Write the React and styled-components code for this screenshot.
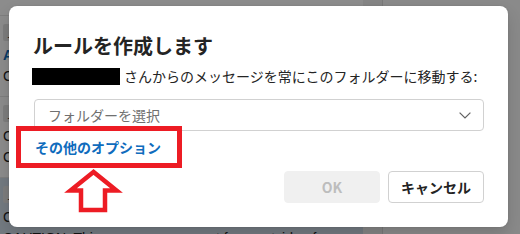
import React from "react";
import styled, { createGlobalStyle } from "styled-components";

const Global = createGlobalStyle`
  html, body { margin: 0; padding: 0; background: #fff; }
  body { font-family: "Noto Sans CJK JP", "Noto Sans", sans-serif; }
  * { box-sizing: border-box; }
`;

const Page = styled.div`
  position: relative;
  width: 520px;
  height: 234px;
  overflow: hidden;
  display: flex;
  background: #fafafa;
`;

const MailList = styled.div`
  width: 363px;
  flex: none;
  display: flex;
  flex-direction: column;
  background: #ffffff;
`;

const MailRow = styled.div`
  height: ${(p) => p.$h || 81}px;
  flex: none;
  display: flex;
  flex-direction: column;
  padding: 8px 0 0 3px;
  border-bottom: 1px solid #e6e6e6;
  background: ${(p) => (p.$selected ? "#d1deec" : "#ffffff")};
  overflow: hidden;
`;

const Chip = styled.div`
  align-self: flex-start;
  height: 17px;
  padding: 0 4px;
  margin-bottom: 4px;
  background: #e3e3e3;
  color: #424242;
  font-size: 12px;
  line-height: 17px;
  border-radius: 2px;
`;

const MailLine = styled.div`
  font-family: "Liberation Sans", "Noto Sans", sans-serif;
  font-size: 14px;
  line-height: 21px;
  white-space: nowrap;
  color: ${(p) => (p.$accent ? "#0f6cbd" : "#242424")};
  font-weight: ${(p) => (p.$accent ? 700 : 400)};
`;

const Gutter = styled.div`
  width: 20px;
  flex: none;
  background: #f2f2f2;
  border-right: 1px solid #dcdcdc;
`;

const ReadingPane = styled.div`
  flex: 1;
  background: #fbfbfb;
`;

const Overlay = styled.div`
  position: absolute;
  inset: 0;
  background: rgba(0, 0, 0, 0.45);
  display: flex;
  align-items: flex-start;
  padding: 6px 12px 0 9px;
`;

const Dialog = styled.div`
  width: 499px;
  background: #ffffff;
  border-radius: 8px;
  box-shadow: 0 0 2px rgba(0, 0, 0, 0.12), 0 8px 16px rgba(0, 0, 0, 0.14);
  padding: 26px 24px 24px 24px;
  display: flex;
  flex-direction: column;
  color: #242424;
`;

const Title = styled.h2`
  margin: 0;
  font-size: 20px;
  line-height: 28px;
  font-weight: 700;
  color: #242424;
`;

const Body = styled.div`
  margin-top: 6px;
  display: flex;
  align-items: center;
  gap: 4px;
  font-size: 14px;
  line-height: 20px;
  height: 20px;
  white-space: nowrap;
`;

const Redacted = styled.span`
  display: inline-block;
  width: 88px;
  height: 17px;
  margin-left: -1px;
  background: #000;
`;

const Select = styled.div`
  margin-top: 13px;
  height: 32px;
  border: 1px solid #d1d1d1;
  border-radius: 4px;
  display: flex;
  align-items: center;
  justify-content: space-between;
  padding: 0 12px 0 13px;
  margin-left: 1px;
  font-size: 14px;
  color: #707070;
`;

const LinkButton = styled.button`
  align-self: flex-start;
  margin-top: 6px;
  margin-left: 2px;
  padding: 0;
  border: none;
  background: none;
  height: 20px;
  font-family: inherit;
  font-size: 14px;
  line-height: 20px;
  font-weight: 700;
  color: #0f6cbd;
  cursor: pointer;
`;

const Actions = styled.div`
  margin-top: 14px;
  display: flex;
  justify-content: flex-end;
  gap: 8px;
`;

const Button = styled.button`
  width: 96px;
  height: 32px;
  border-radius: 4px;
  font-family: inherit;
  font-size: 14px;
  font-weight: 700;
  border: 1px solid ${(p) => (p.$disabled ? "#f0f0f0" : "#d1d1d1")};
  background: ${(p) => (p.$disabled ? "#f0f0f0" : "#ffffff")};
  color: ${(p) => (p.$disabled ? "#bdbdbd" : "#242424")};
  padding: 0;
`;

const Highlight = styled.div`
  position: absolute;
  left: 16px;
  top: 126px;
  width: 166px;
  height: 42px;
  border: 5px solid #ed1c24;
  pointer-events: none;
`;

const ArrowMark = styled.svg`
  position: absolute;
  left: 60px;
  top: 164px;
  width: 70px;
  height: 54px;
  overflow: visible;
  pointer-events: none;
`;

const Chevron = () => (
  <svg width="12" height="7" viewBox="0 0 12 7" fill="none">
    <path d="M0.6 0.6 L6 6 L11.4 0.6" stroke="#616161" strokeWidth="1.2" />
  </svg>
);

export default function App() {
  return (
    <>
      <Global />
      <Page>
        <MailList>
          <MailRow $h={16} />
          <MailRow $h={81}>
            <Chip>ムラタ</Chip>
            <MailLine $accent>Action required</MailLine>
            <MailLine>CAUTION: This message was sent from outside</MailLine>
          </MailRow>
          <MailRow $h={81}>
            <Chip>ムラタ</Chip>
            <MailLine>Conference call</MailLine>
            <MailLine>CAUTION: This message was sent from outside</MailLine>
          </MailRow>
          <MailRow $h={81} $selected>
            <Chip>ムラタ</Chip>
            <MailLine>Confirmation</MailLine>
            <MailLine>CAUTION: This message was sent from outside of us</MailLine>
          </MailRow>
        </MailList>
        <Gutter />
        <ReadingPane />
        <Overlay>
          <Dialog>
            <Title>ルールを作成します</Title>
            <Body>
              <Redacted />
              <span>さんからのメッセージを常にこのフォルダーに移動する:</span>
            </Body>
            <Select>
              <span>フォルダーを選択</span>
              <Chevron />
            </Select>
            <LinkButton>その他のオプション</LinkButton>
            <Actions>
              <Button $disabled>OK</Button>
              <Button>キャンセル</Button>
            </Actions>
          </Dialog>
        </Overlay>
        <Highlight />
        <ArrowMark viewBox="60 164 70 54">
          <path
            d="M93.5 172 L70.5 190.5 L81 190.5 L81 210 L105 210 L105 190.5 L116.5 190.5 Z"
            fill="none"
            stroke="#ed1c24"
            strokeWidth="4.5"
            strokeLinejoin="miter"
          />
        </ArrowMark>
      </Page>
    </>
  );
}
